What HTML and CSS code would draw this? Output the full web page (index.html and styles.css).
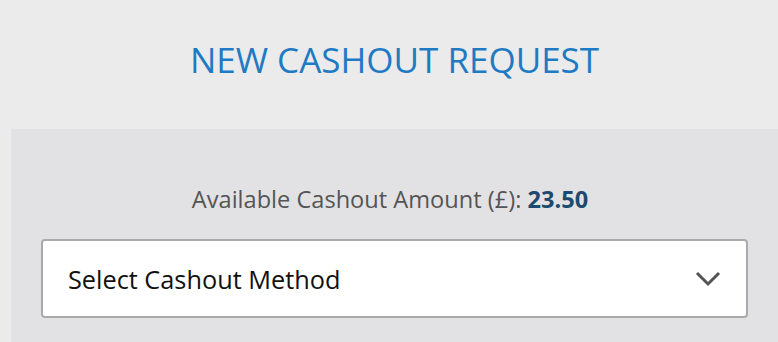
FILE: index.html
```html
<!DOCTYPE html>
<html>
<head>
<meta charset="utf-8">
<link rel="stylesheet" href="styles.css">
</head>
<body>
<div class="page">
  <header class="head">
    <h1 class="title">NEW CASHOUT REQUEST</h1>
  </header>
  <section class="panel">
    <p class="avail">Available Cashout Amount (£): <strong class="amount">23.50</strong></p>
    <div class="select">
      <span class="select-text">Select Cashout Method</span>
      <svg class="chev" width="26" height="16" viewBox="0 0 26 16"><path d="M2 2 L13 13 L24 2" fill="none" stroke="#555" stroke-width="3"/></svg>
    </div>
  </section>
</div>
</body>
</html>
```
FILE: styles.css
```css
html, body { margin: 0; padding: 0; }
body {
  background: #ebebeb;
  font-family: "Open Sans", "Liberation Sans", sans-serif;
  width: 778px;
  height: 342px;
  overflow: hidden;
}
.page { display: flex; flex-direction: column; padding-left: 11px; }
.head {
  height: 129px;
  display: flex;
  align-items: center;
  justify-content: center;
}
.title {
  margin: 0;
  padding-bottom: 10px;
  font-weight: 400;
  font-size: 35px;
  color: #1f7ac4;
  letter-spacing: 0;
}
.panel {
  background: #e2e2e4;
  height: 213px;
  padding: 0 30px;
  display: flex;
  flex-direction: column;
  align-items: stretch;
}
.avail {
  margin: 54px 0 0;
  padding-right: 9px;
  text-align: center;
  font-size: 23.6px;
  color: #555;
  line-height: 32px;
}
.amount { color: #1e4a6e; font-weight: 700; }
.select {
  margin-top: 24px;
  height: 75px;
  background: #fff;
  border: 2px solid #aaa;
  border-radius: 4px;
  display: flex;
  align-items: center;
  justify-content: space-between;
  padding: 0 25px;
}
.select-text { font-size: 25.3px; color: #111; }
.chev { display: block; }
```
